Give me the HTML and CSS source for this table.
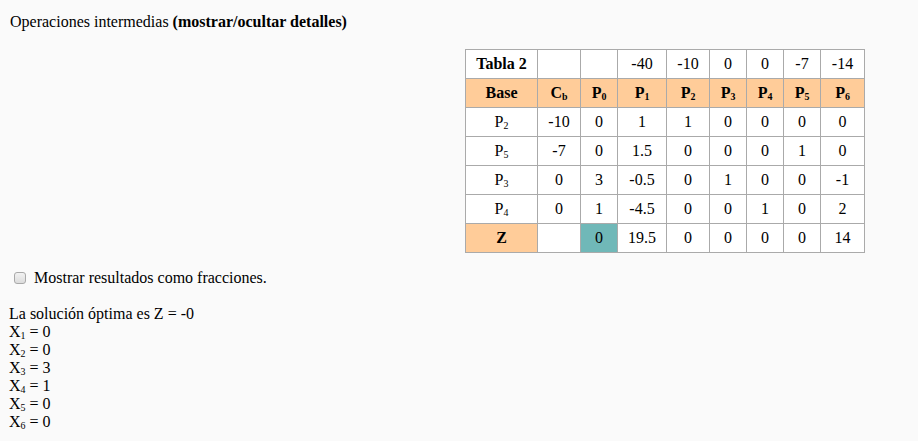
FILE: index.html
```html
<!DOCTYPE html>
<html lang="es">
<head>
<meta charset="utf-8">
<title>Simplex</title>
<link rel="stylesheet" href="styles.css">
</head>
<body>
<p class="ops">Operaciones intermedias <b>(mostrar/ocultar detalles)</b></p>
<div class="table-wrap">
<table class="simplex">
<colgroup><col class="c1"><col class="c2"><col class="c3"><col class="c4"><col class="c5"><col class="c6"><col class="c6"><col class="c6"><col class="c9"></colgroup>
<tr class="costs"><th class="title">Tabla 2</th><td></td><td></td><td>-40</td><td>-10</td><td>0</td><td>0</td><td>-7</td><td>-14</td></tr>
<tr class="head"><th>Base</th><th>C<span class="s">b</span></th><th>P<span class="s">0</span></th><th>P<span class="s">1</span></th><th>P<span class="s">2</span></th><th>P<span class="s">3</span></th><th>P<span class="s">4</span></th><th>P<span class="s">5</span></th><th>P<span class="s">6</span></th></tr>
<tr><td>P<span class="s">2</span></td><td>-10</td><td>0</td><td>1</td><td>1</td><td>0</td><td>0</td><td>0</td><td>0</td></tr>
<tr><td>P<span class="s">5</span></td><td>-7</td><td>0</td><td>1.5</td><td>0</td><td>0</td><td>0</td><td>1</td><td>0</td></tr>
<tr><td>P<span class="s">3</span></td><td>0</td><td>3</td><td>-0.5</td><td>0</td><td>1</td><td>0</td><td>0</td><td>-1</td></tr>
<tr><td>P<span class="s">4</span></td><td>0</td><td>1</td><td>-4.5</td><td>0</td><td>0</td><td>1</td><td>0</td><td>2</td></tr>
<tr><th class="z">Z</th><td></td><td class="hl">0</td><td>19.5</td><td>0</td><td>0</td><td>0</td><td>0</td><td>14</td></tr>
</table>
</div>
<label class="frac"><input type="checkbox"> Mostrar resultados como fracciones.</label>
<div class="result">
<div>La solución óptima es Z = -0</div>
<div>X<span class="s">1</span> = 0</div>
<div>X<span class="s">2</span> = 0</div>
<div>X<span class="s">3</span> = 3</div>
<div>X<span class="s">4</span> = 1</div>
<div>X<span class="s">5</span> = 0</div>
<div>X<span class="s">6</span> = 0</div>
</div>
</body>
</html>
```
FILE: styles.css
```css
html, body {
  background: #fafafa;
}
body {
  margin: 8px;
  font-family: "Liberation Serif", "Times New Roman", serif;
  font-size: 16px;
  color: #000;
}
.ops {
  margin: 5px 0 0 2px;
  font-size: 16px;
  line-height: 18px;
}
.table-wrap {
  display: flex;
  padding-left: 457px;
  margin-top: 18px;
}
.simplex {
  border-collapse: collapse;
  table-layout: fixed;
  width: 399px;
  background: #fff;
  font-size: 16px;
}
.c1 { width: 72px; }
.c2 { width: 43px; }
.c3 { width: 37px; }
.c4 { width: 49px; }
.c5 { width: 43px; }
.c6 { width: 37px; }
.c9 { width: 44px; }
.simplex td, .simplex th {
  border: 1px solid #aaa;
  text-align: center;
  padding: 5px 0;
  line-height: 18px;
  white-space: nowrap;
}
.simplex th {
  font-weight: bold;
}
.head th, .simplex .z {
  background: #ffcc99;
}
.simplex .hl {
  background: #70b8b8;
}
.s {
  font-size: 0.62em;
  line-height: 0;
  position: relative;
  top: 2px;
}
.frac {
  display: flex;
  align-items: center;
  margin: 16px 0 0 4px;
  font-size: 16px;
  line-height: 18px;
}
.frac input {
  appearance: none;
  -webkit-appearance: none;
  box-sizing: border-box;
  margin: 0 8px 0 2px;
  width: 12px;
  height: 12px;
  border: 1px solid #a9a9a9;
  border-radius: 3px;
  background: linear-gradient(#f2f2f2, #dcdcdc);
}
.result {
  margin-top: 18px;
  margin-left: 1px;
  font-size: 16px;
  line-height: 18px;
}
```
